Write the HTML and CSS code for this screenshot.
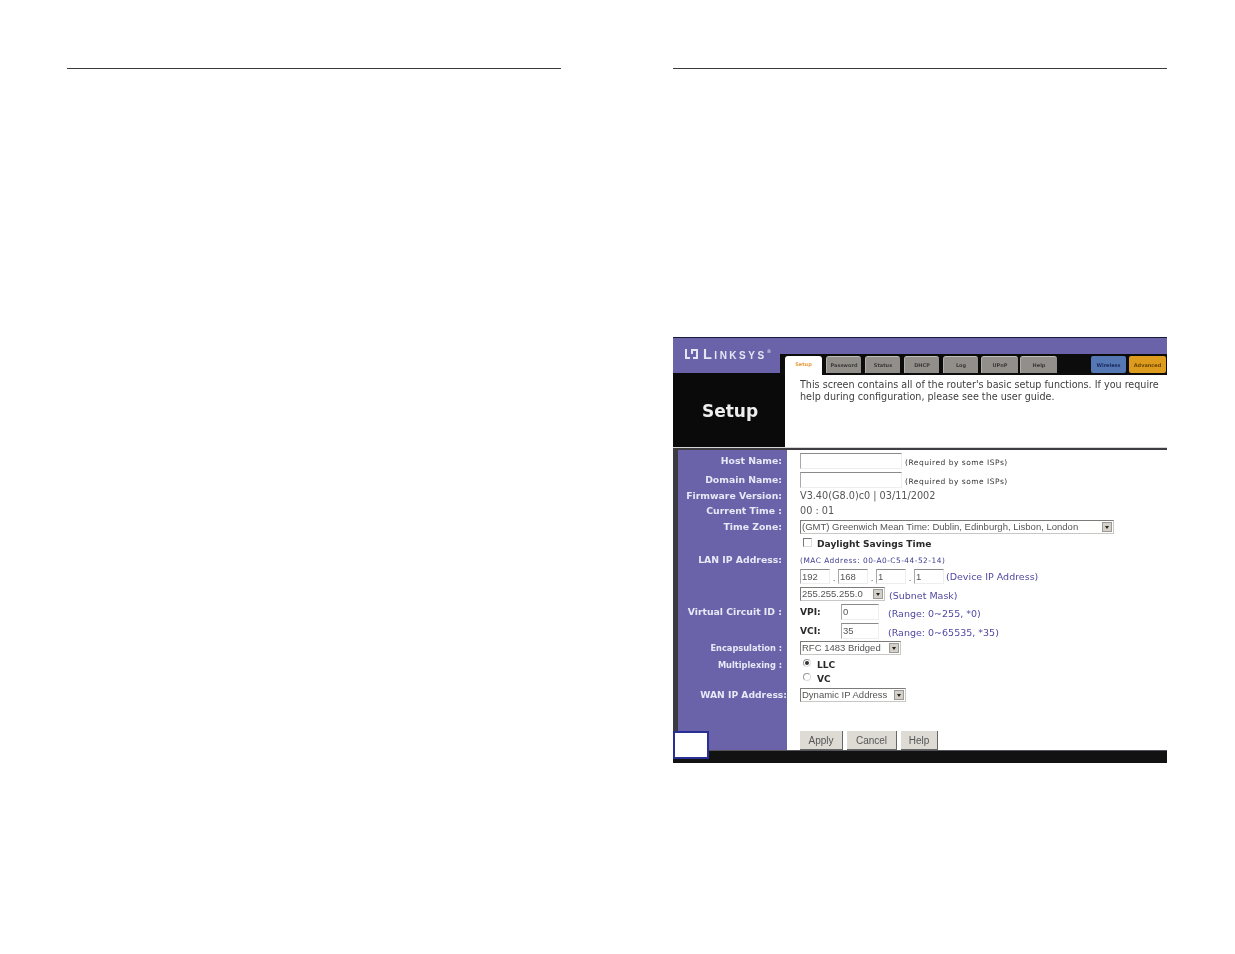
FILE: index.html
```html
<!DOCTYPE html>
<html lang="en">
<head>
<meta charset="utf-8">
<title>Setup</title>
<link rel="stylesheet" href="styles.css">
</head>
<body>
<div class="page">
  <section class="col"><div class="rule"></div></section>
  <section class="col">
    <div class="rule"></div>
    <figure class="shot">
      <div class="shot-inner">
        <div class="top">
          <div class="side">
            <div class="logo">
              <svg class="logo-icon" width="15" height="12" viewBox="0 0 15 12"><path d="M1 1h2v8h3v2H1zM7 1h7v10H9V9h3V3H9v3H7z" fill="#e6e6f2"/></svg>
              <span class="logo-text">Linksys</span><span class="logo-mark">®</span>
            </div>
            <div class="title">Setup</div>
          </div>
          <div class="head">
            <div class="band"></div>
            <div class="tabs">
              <span class="tab active">Setup</span>
              <span class="tab w35 g4">Password</span>
              <span class="tab w35 g4">Status</span>
              <span class="tab w35 g4">DHCP</span>
              <span class="tab w35">Log</span>
              <span class="tab w37">UPnP</span>
              <span class="tab w37 tight">Help</span>
              <span class="tab wireless">Wireless</span>
              <span class="tab advanced">Advanced</span>
            </div>
            <p class="intro">This screen contains all of the router's basic setup functions. If you require<br>help during configuration, please see the user guide.</p>
          </div>
        </div>
        <div class="divider"></div>
        <div class="main">
          <div class="form">
            <div class="lab">Host Name:</div>
            <div class="val"><span class="input wide"></span><span class="req">(Required by some ISPs)</span></div>
            <div class="lab">Domain Name:</div>
            <div class="val"><span class="input wide"></span><span class="req">(Required by some ISPs)</span></div>
            <div class="lab">Firmware Version:</div>
            <div class="val plain">V3.40(G8.0)c0 | 03/11/2002</div>
            <div class="lab">Current Time :</div>
            <div class="val plain">00 : 01</div>
            <div class="lab">Time Zone:</div>
            <div class="val"><span class="select tz">(GMT) Greenwich Mean Time: Dublin, Edinburgh, Lisbon, London<i class="arrow"></i></span></div>
            <div class="lab"></div>
            <div class="val check"><span class="box"></span><b>Daylight Savings Time</b></div>
            <div class="lab">LAN IP Address:</div>
            <div class="val mac">(MAC Address: 00-A0-C5-44-52-14)</div>
            <div class="lab"></div>
            <div class="val ip"><span class="input oct">192</span><span class="dot">.</span><span class="input oct">168</span><span class="dot">.</span><span class="input oct">1</span><span class="dot">.</span><span class="input oct">1</span><span class="note">(Device IP Address)</span></div>
            <div class="lab"></div>
            <div class="val"><span class="select mask">255.255.255.0<i class="arrow"></i></span><span class="note n4">(Subnet Mask)</span></div>
            <div class="lab">Virtual Circuit ID :</div>
            <div class="val"><b class="key">VPI:</b><span class="input vc">0</span><span class="note n9">(Range: 0~255, *0)</span></div>
            <div class="lab"></div>
            <div class="val"><b class="key">VCI:</b><span class="input vc">35</span><span class="note n9">(Range: 0~65535, *35)</span></div>
            <div class="lab small">Encapsulation :</div>
            <div class="val"><span class="select enc">RFC 1483 Bridged<i class="arrow"></i></span></div>
            <div class="lab small">Multiplexing :</div>
            <div class="val check"><span class="radio on"></span><b>LLC</b></div>
            <div class="lab"></div>
            <div class="val check"><span class="radio"></span><b>VC</b></div>
            <div class="lab flush">WAN IP Address:</div>
            <div class="val"><span class="select wan">Dynamic IP Address<i class="arrow"></i></span></div>
            <div class="lab"></div>
            <div class="val"></div>
            <div class="lab"></div>
            <div class="val buttons"><span class="btn apply">Apply</span><span class="btn cancel">Cancel</span><span class="btn help">Help</span></div>
          </div>
        </div>
        <div class="foot"></div>
      </div>
      <div class="stamp"></div>
    </figure>
  </section>
</div>
</body>
</html>
```
FILE: styles.css
```css
* { box-sizing: border-box; }
html, body { margin: 0; padding: 0; background: #fff; }
body { font-family: "DejaVu Sans", sans-serif; height: 954px; overflow: hidden; }
.page { display: flex; gap: 112px; padding: 68px 0 0 67px; }
.col { width: 494px; }
.rule { height: 1px; background: #3a3a3a; }

.shot { position: relative; margin: 268px 0 0; width: 494px; height: 426px; overflow: hidden; }
.shot-inner { width: 494px; height: 426px; background: #6a63aa; filter: blur(0.7px); display: flex; flex-direction: column; }

.top { display: flex; height: 110px; border-top: 1px solid #1c1a3a; }
.side { width: 112px; display: flex; flex-direction: column; }
.logo { height: 35px; background: #6a63aa; display: flex; align-items: center; padding: 0 0 3px 11px; color: #e6e6f2; }
.logo-icon { flex: none; }
.logo-text { font-family: "Liberation Sans", sans-serif; font-variant: small-caps; font-weight: 700; font-size: 14.5px; letter-spacing: 2.5px; margin-left: 4px; }
.logo-mark { font-size: 5px; margin: -6px 0 0 0; }
.title { flex: 1; background: #0a0a0a; color: #eee; font-weight: 700; font-size: 17px; display: flex; align-items: center; justify-content: center; padding: 2px 0 0 2px; }

.head { flex: 1; display: flex; flex-direction: column; background: #fff; min-width: 0; }
.band { height: 16px; background: #6a63aa; flex: none; }
.tabs { height: 21px; flex: none; margin-left: -5px; padding: 0 0 2px 5px; background: #0c0c0c; display: flex; align-items: flex-end; font-size: 5px; font-weight: 700; }
.tab { height: 17px; display: flex; align-items: center; justify-content: center; background: #928f8a; color: #3a3a3a; border-top: 1px solid #c0beb9; border-left: 1px solid #b0aea9; border-radius: 3px 3px 0 0; white-space: nowrap; overflow: hidden; }
.active { width: 37px; height: 19px; margin-bottom: -2px; background: #fff; color: #e79a3c; border: 0; margin-right: 4px; padding-bottom: 3px; }
.w35 { width: 35px; }
.w35.g4 { margin-right: 4px; }
.w35 + .w37 { margin-left: 3px; margin-right: 2px; }
.w37 { width: 37px; }
.tight { margin-left: 0; }
.wireless { width: 35px; margin-left: 34px; margin-right: 3px; background: #5578b4; color: #1c2a60; border: 0; border-radius: 2px; }
.advanced { width: 37px; background: #dd9c1e; color: #6a4500; border: 0; border-radius: 2px; }
.intro { margin: 4px 0 0 15px; font-size: 9.6px; line-height: 12px; color: #3e3e3e; white-space: nowrap; }

.divider { height: 3px; background: #3f3d42; border-top: 1px solid #d8d5d8; flex: none; }
.main { flex: 1; background: #fff; display: flex; min-height: 0; }
.form { width: 100%; padding-top: 2px; display: grid; grid-template-columns: 109px 1fr; grid-template-rows: 18px 20px 12px 18px 14px 20px 12px 20px 16px 20px 18px 16px 18px 10px 22px 25px 19px; border-left: 5px solid #3b3a40; background: linear-gradient(#fff, #fff) no-repeat 109px 0 / 100% 100%, #6a63aa; }
.lab { grid-column: 1; display: flex; align-items: center; justify-content: flex-end; padding: 0 5px 2px 0; color: #e8e8f6; font-size: 9.3px; font-weight: 700; white-space: nowrap; }
.lab.small { font-size: 8.25px; padding-bottom: 0; }
.lab.flush { padding-right: 0; font-size: 9.2px; }
.val { grid-column: 2; display: flex; align-items: center; padding-left: 13px; font-size: 8.6px; color: #444; white-space: nowrap; min-width: 0; }
.plain { font-size: 9.7px; color: #555; padding-bottom: 1px; }
.input { display: block; height: 15px; background: #fff; border-top: 1px solid #8a8a8a; border-left: 1px solid #a8a8a8; border-right: 1px solid #eee; border-bottom: 1px solid #eee; font-family: "Liberation Sans", sans-serif; font-size: 9.5px; color: #555; line-height: 13px; padding-left: 1px; flex: none; }
.wide { width: 102px; height: 16px; }
.req { font-size: 7.5px; letter-spacing: 0.5px; color: #333; margin: 3px 0 0 3px; font-weight: 400; }
.select { position: relative; display: block; height: 14px; background: #fff; border: 1px solid #7d7b78; border-right-color: #c9c7c3; border-bottom-color: #c9c7c3; font-family: "Liberation Sans", sans-serif; font-size: 9.5px; line-height: 12px; color: #555; padding-left: 1px; flex: none; }
.tz { width: 314px; }
.mask { width: 85px; }
.enc { width: 101px; }
.wan { width: 106px; }
.arrow { position: absolute; top: 1px; right: 1px; width: 10px; height: 10px; background: #d4d0c8; border: 1px solid #999; }
.arrow::after { content: ""; position: absolute; top: 3px; left: 2px; border: 2.5px solid transparent; border-top: 3px solid #222; border-bottom: 0; }
.check b, .key { font-size: 9.1px; color: #2a2a2a; }
.box { width: 9px; height: 9px; margin: -4px 5px 0 3px; border-top: 1px solid #777; border-left: 1px solid #777; border-right: 1px solid #ddd; border-bottom: 1px solid #ddd; flex: none; }
.radio { position: relative; width: 8px; height: 8px; margin: -5px 6px 0 3px; border-radius: 50%; border: 1px solid #999; border-right-color: #ddd; border-bottom-color: #ddd; flex: none; }
.radio.on::after { content: ""; position: absolute; left: 1px; top: 1px; width: 4px; height: 4px; border-radius: 50%; background: #333; }
.mac { font-size: 7.4px; letter-spacing: 0.5px; color: #3d3d90; }
.oct { width: 30px; }
.dot { width: 8px; text-align: center; color: #555; padding-top: 4px; flex: none; }
.note { font-size: 9.5px; color: #5048a0; margin-left: 2px; }
.n4 { margin-left: 4px; margin-top: 2px; }
.n9 { margin-left: 9px; margin-top: 2px; letter-spacing: 0; }
.key { width: 41px; flex: none; }
.vc { width: 38px; height: 16px; }
.buttons { align-items: stretch; }
.btn { display: flex; align-items: center; justify-content: center; background: #dedbd5; border-right: 1px solid #666; border-bottom: 1px solid #666; color: #555; font-family: "Liberation Sans", sans-serif; font-size: 10px; }
.apply { width: 43px; margin-right: 4px; }
.cancel { width: 50px; margin-right: 4px; }
.help { width: 37px; }
.foot { height: 13px; flex: none; background: #121212; border-top: 1px solid #55535a; }
.stamp { position: absolute; left: 0; top: 394px; width: 36px; height: 28px; background: #fff; border: 2px solid #2a2f95; }
```
